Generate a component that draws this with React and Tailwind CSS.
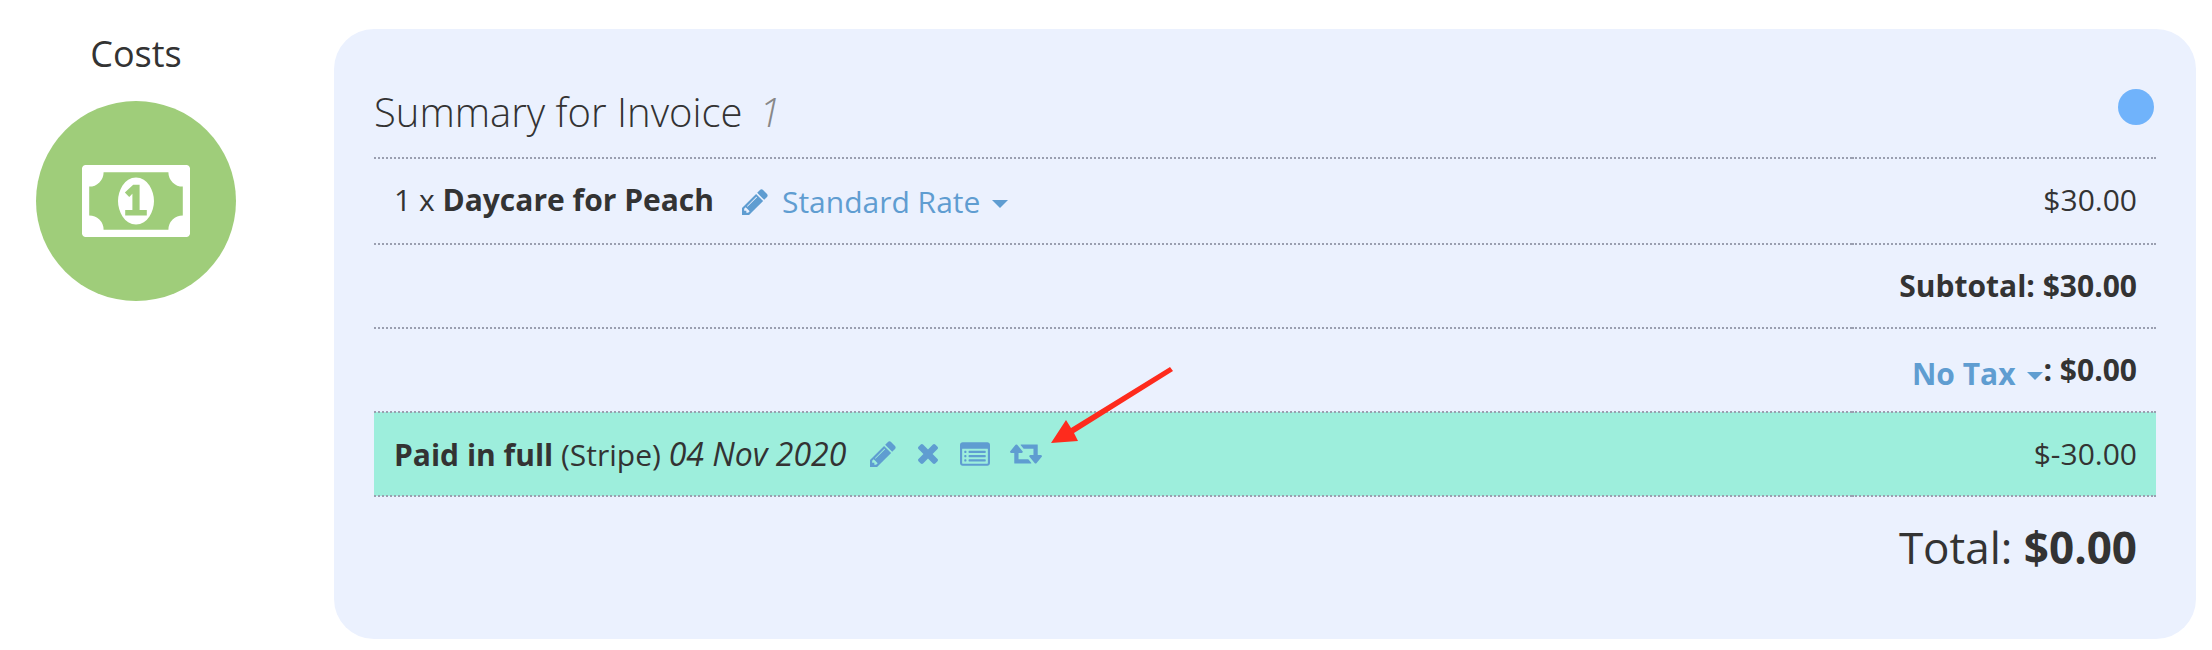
const ICONS = {
  pencil: {
    box: "128 128 1536 1536",
    d: "M491 1536l91-91-235-235-91 91v107h128v128h107zm523-928q0-22-22-22-10 0-17 7l-542 542q-7 7-7 17 0 22 22 22 10 0 17-7l542-542q7-7 7-17zm-54-192l416 416-832 832h-416v-416zm683 96q0 53-37 90l-166 166-416-416 166-165q36-38 90-38 53 0 91 38l235 234q37 39 37 91z",
  },
  times: {
    box: "302 366 1188 1188",
    d: "M1490 1322q0 40-28 68l-136 136q-28 28-68 28t-68-28l-294-294-294 294q-28 28-68 28t-68-28l-136-136q-28-28-28-68t28-68l294-294-294-294q-28-28-28-68t28-68l136-136q28-28 68-28t68 28l294 294 294-294q28-28 68-28t68 28l136 136q28 28 28 68t-28 68l-294 294 294 294q28 28 28 68z",
  },
  list: {
    box: "0 128 1792 1408",
    d: "M384 1184v64q0 13-9.5 22.5t-22.5 9.5h-64q-13 0-22.5-9.5t-9.5-22.5v-64q0-13 9.5-22.5t22.5-9.5h64q13 0 22.5 9.5t9.5 22.5zm0-256v64q0 13-9.5 22.5t-22.5 9.5h-64q-13 0-22.5-9.5t-9.5-22.5v-64q0-13 9.5-22.5t22.5-9.5h64q13 0 22.5 9.5t9.5 22.5zm0-256v64q0 13-9.5 22.5t-22.5 9.5h-64q-13 0-22.5-9.5t-9.5-22.5v-64q0-13 9.5-22.5t22.5-9.5h64q13 0 22.5 9.5t9.5 22.5zm1152 512v64q0 13-9.5 22.5t-22.5 9.5h-960q-13 0-22.5-9.5t-9.5-22.5v-64q0-13 9.5-22.5t22.5-9.5h960q13 0 22.5 9.5t9.5 22.5zm0-256v64q0 13-9.5 22.5t-22.5 9.5h-960q-13 0-22.5-9.5t-9.5-22.5v-64q0-13 9.5-22.5t22.5-9.5h960q13 0 22.5 9.5t9.5 22.5zm0-256v64q0 13-9.5 22.5t-22.5 9.5h-960q-13 0-22.5-9.5t-9.5-22.5v-64q0-13 9.5-22.5t22.5-9.5h960q13 0 22.5 9.5t9.5 22.5zm128 704v-832q0-13-9.5-22.5t-22.5-9.5h-1472q-13 0-22.5 9.5t-9.5 22.5v832q0 13 9.5 22.5t22.5 9.5h1472q13 0 22.5-9.5t9.5-22.5zm128-1088v1088q0 66-47 113t-113 47h-1472q-66 0-113-47t-47-113v-1088q0-66 47-113t113-47h1472q66 0 113 47t47 113z",
  },
  retweet: {
    box: "0 512 1920 1152",
    d: "M1280 1632q0 13-9.5 22.5t-22.5 9.5h-960q-8 0-13.5-2t-9-7-5.5-8-3-11.5-1-11.5v-600h-192q-26 0-45-19t-19-45q0-24 15-41l320-384q19-22 49-22t49 22l320 384q15 17 15 41 0 26-19 45t-45 19h-192v384h576q16 0 25 11l160 192q7 10 7 21zm640-416q0 24-15 41l-320 384q-20 23-49 23t-49-23l-320-384q-15-17-15-41 0-26 19-45t45-19h192v-384h-576q-16 0-25-12l-160-192q-7-9-7-20 0-13 9.5-22.5t22.5-9.5h960q8 0 13.5 2t9 7 5.5 8 3 11.5 1 11.5v600h192q26 0 45 19t19 45z",
  },
  money: {
    box: "0 256 1920 1280",
    d: "M768 1152h384v-96h-128v-448h-114l-148 137 77 80q42-37 55-57h2v288h-128v96zm512-256q0 70-21 142t-59.5 134-101.5 101-138 39-138-39-101.5-101-59.5-134-21-142 21-142 59.5-134 101.5-101 138-39 138 39 101.5 101 59.5 134 21 142zm512 256v-512q-106 0-181-75t-75-181h-1152q0 106-75 181t-181 75v512q106 0 181 75t75 181h1152q0-106 75-181t181-75zm128-832v1152q0 26-19 45t-45 19h-1792q-26 0-45-19t-19-45v-1152q0-26 19-45t45-19h1792q26 0 45 19t19 45z",
  },
};

function Icon({ name, className }) {
  return (
    <svg viewBox={ICONS[name].box} fill="currentColor" aria-hidden="true" className={className}>
      <path d={ICONS[name].d} />
    </svg>
  );
}

function IconButton({ label, name, className }) {
  return (
    <button type="button" aria-label={label} className="cursor-pointer hover:text-[#2a6496]">
      <Icon name={name} className={className} />
    </button>
  );
}

function Dropdown({ children }) {
  return (
    <button type="button" aria-haspopup="menu" className="inline-flex cursor-pointer items-center gap-3 text-[#5f9dd1] hover:text-[#2a6496]">
      {children}
      <svg viewBox="0 0 16 8" fill="currentColor" aria-hidden="true" className="mt-1 h-2 w-4">
        <path d="M0 0h16l-8 8z" />
      </svg>
    </button>
  );
}

export default function App() {
  return (
    <div className="flex items-start bg-white pt-[29px] pr-4 pb-[11px] pl-9 font-['Open_Sans',sans-serif] text-[30px] leading-[42px] text-[#333]">
      <aside className="mr-[98px] flex w-[200px] shrink-0 flex-col items-center">
        <h2 className="text-[36px] leading-[50px]">Costs</h2>
        <div className="mt-[22px] flex size-[200px] items-center justify-center rounded-full bg-[#9fcd7a] text-white">
          <Icon name="money" className="h-[72px] w-[108px]" />
        </div>
      </aside>

      <section className="flex-1 rounded-[40px] bg-[#ebf1fe] px-10 pt-14 pb-[60px]">
        <div className="flex items-start justify-between pb-[18px]">
          <h1 className="text-[40px] leading-[54px] font-light">
            Summary for Invoice <em className="ml-1.5 text-[#888]">1</em>
          </h1>
          <span className="mt-1 mr-[2px] size-9 rounded-full bg-[#70b3fb]" />
        </div>

        <table className="w-full border-collapse">
          <tbody>
            <tr className="h-[86px] border-y-2 border-dotted border-[#9a9fb0]">
              <td className="pr-[19px] pb-0.5 pl-5">
                <div className="flex items-center">
                  <span>1 x <strong>Daycare for Peach</strong></span>
                  <span className="mt-1 ml-7 flex items-center gap-3.5 text-[#5f9dd1]">
                    <IconButton label="Edit item" name="pencil" className="size-[26px]" />
                    <Dropdown>Standard Rate</Dropdown>
                  </span>
                </div>
              </td>
              <td className="w-[304px] pr-[19px] pb-0.5 pl-5 text-right">$30.00</td>
            </tr>
            <tr className="h-[84px] border-y-2 border-dotted border-[#9a9fb0] font-bold">
              <td colSpan={2} className="pr-[19px] pl-5 text-right">Subtotal: $30.00</td>
            </tr>
            <tr className="h-[84px] border-y-2 border-dotted border-[#9a9fb0] font-bold">
              <td colSpan={2} className="pt-1 pr-[19px] pl-5">
                <div className="flex justify-end">
                  <span className="pt-1"><Dropdown>No Tax</Dropdown></span>
                  <span>: $0.00</span>
                </div>
              </td>
            </tr>
            <tr className="h-[84px] border-y-2 border-dotted border-[#9a9fb0] bg-[#9deedc]">
              <td className="pr-[19px] pl-5">
                <div className="flex items-center">
                  <span>
                    <strong>Paid in full</strong> (Stripe) <em className="text-[32px]">04 Nov 2020</em>
                  </span>
                  <span className="relative ml-6 flex items-center text-[#5f9dd1]">
                    <IconButton label="Edit payment" name="pencil" className="mr-[22px] size-[26px]" />
                    <IconButton label="Delete payment" name="times" className="mr-[22px] size-5" />
                    <IconButton label="Payment details" name="list" className="mr-5 h-6 w-[30px]" />
                    <IconButton label="Refund payment" name="retweet" className="h-5 w-8" />
                    {/* Pointer to the refund button */}
                    <svg viewBox="0 0 122 76" aria-hidden="true" className="pointer-events-none absolute bottom-6 left-full ml-[9px] h-[76px] w-[122px] max-w-none">
                      <path d="M0 76L15 53L20 61L119 0L122 4L23 66L27 74Z" fill="#fe2b1d" />
                    </svg>
                  </span>
                </div>
              </td>
              <td className="pr-[19px] pl-5 text-right">$-30.00</td>
            </tr>
          </tbody>
        </table>

        <p className="mt-[18px] pr-[19px] pl-5 text-right text-[44px] leading-[64px]">
          Total: <strong>$0.00</strong>
        </p>
      </section>
    </div>
  );
}
